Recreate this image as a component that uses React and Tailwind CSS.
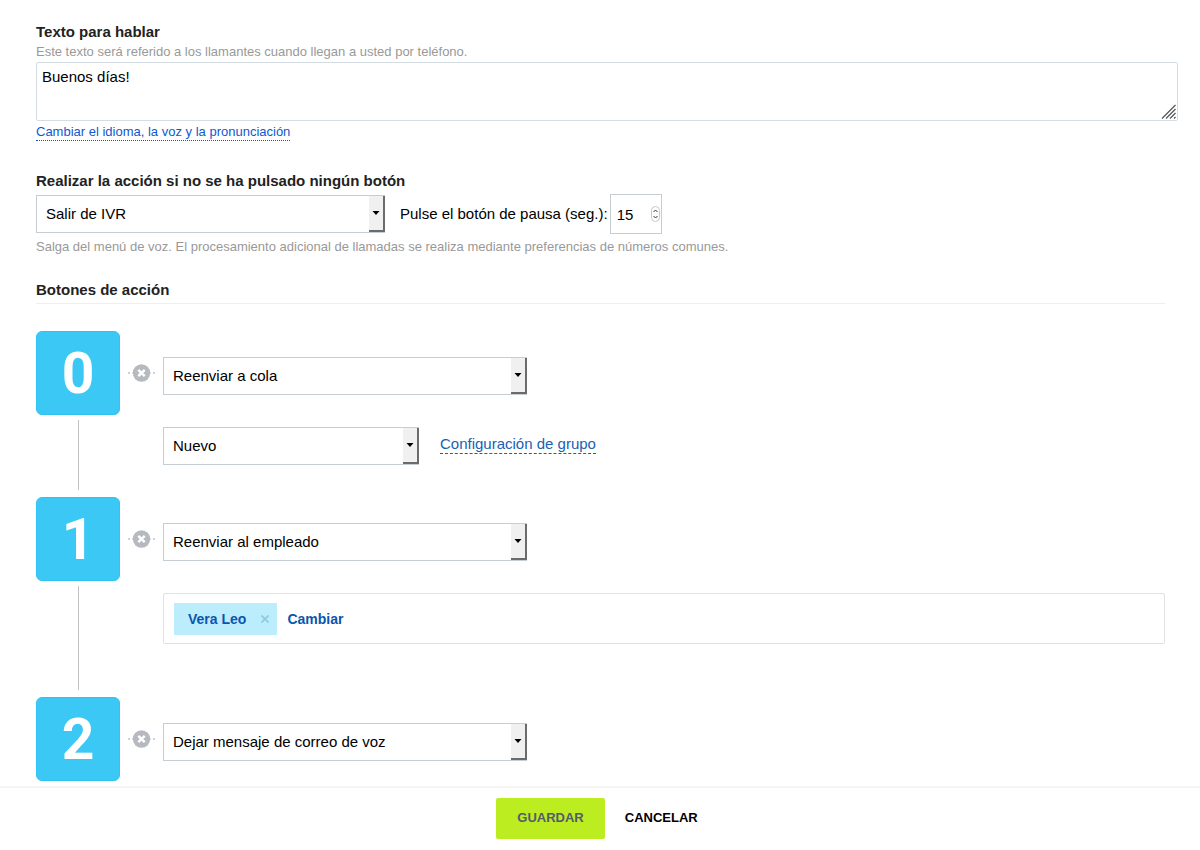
import React, { useState } from "react";

const ResizeGrip = () => (
  <svg
    className="absolute right-[1px] bottom-[2px] pointer-events-none"
    width="16"
    height="15"
    viewBox="0 0 16 15"
    stroke="#555"
    strokeWidth="1.2"
    aria-hidden="true"
  >
    <path d="M1 14.5L14.5 1M5 14.5L14.5 5M9 14.5L14.5 9M13 14.5L14.5 13" />
  </svg>
);

const SelectBox = ({ label, options, className }) => {
  const [value, setValue] = useState(options[0]);

  return (
    <div className={`relative h-[38px] ${className}`}>
      <select
        aria-label={label}
        value={value}
        onChange={(e) => setValue(e.target.value)}
        className="appearance-none block w-full h-full pl-[9px] pr-5 border border-[#c6cdd3] bg-white text-[15px] text-black"
      >
        {options.map((option) => (
          <option key={option}>{option}</option>
        ))}
      </select>
      <span className="absolute top-[1px] right-0 bottom-[1px] w-4 flex items-center justify-center bg-[#f0f0f0] border-r-2 border-b-2 border-[#6b6b6b] pointer-events-none">
        <svg width="8" height="4" viewBox="0 0 8 4" aria-hidden="true">
          <path d="M0.5 0h7L4 4z" fill="#000" />
        </svg>
      </span>
    </div>
  );
};

const RemoveButton = ({ digit }) => (
  <button
    type="button"
    aria-label={`Eliminar botón ${digit}`}
    className="mt-[33px] w-[27px] h-[18px] shrink-0"
  >
    <svg width="27" height="18" viewBox="0 0 27 18" aria-hidden="true">
      <circle cx="1" cy="9" r="0.9" fill="#b9bcc2" />
      <path d="M4 9h19" stroke="#d5d7da" strokeWidth="1.5" />
      <circle cx="26" cy="9" r="0.9" fill="#b9bcc2" />
      <circle cx="13.5" cy="9" r="8.7" fill="#b6b9c0" />
      <path
        d="M10.3 5.8l6.4 6.4M16.7 5.8l-6.4 6.4"
        stroke="#fff"
        strokeWidth="2.5"
      />
    </svg>
  </button>
);

const ActionRow = ({ digit, action, className, children }) => (
  <li className={`flex ${className}`}>
    <div className="w-[84px] shrink-0 flex flex-col items-center">
      <div className="w-full h-[84px] shrink-0 flex items-center justify-center rounded-md bg-[#3bc8f5] border border-[#2fc3f3] font-['Roboto',sans-serif] font-bold text-[57px] leading-none text-white">
        {digit}
      </div>
      <div className="flex-1 w-px mt-[5px] mb-[7px] bg-[#bfc1c4]" />
    </div>
    <div className="mx-2">
      <RemoveButton digit={digit} />
    </div>
    <div className="flex-1 min-w-0 pt-[26px]">
      <SelectBox
        label={`Acción del botón ${digit}`}
        options={[action]}
        className="w-[364px] max-w-full"
      />
      {children}
    </div>
  </li>
);

const App = () => {
  const [text, setText] = useState("Buenos días!");
  const [pause, setPause] = useState(15);

  return (
    <form
      onSubmit={(e) => e.preventDefault()}
      className="h-screen flex flex-col bg-white font-['Liberation_Sans',Arial,sans-serif] text-[15px] leading-5 text-black"
    >
      <main className="flex-1 min-h-0 overflow-y-auto [scrollbar-width:none] pl-9 pr-[35px] pt-[22px]">
        <section className="-mr-[13px]">
          <label htmlFor="speech" className="block font-bold text-[#222]">
            Texto para hablar
          </label>
          <p className="text-[13px] text-[#999]">
            Este texto será referido a los llamantes cuando llegan a usted por
            teléfono.
          </p>
          <div className="relative">
            <textarea
              id="speech"
              value={text}
              onChange={(e) => setText(e.target.value)}
              className="block w-full h-[59px] px-[5px] py-1 resize-none rounded-xs border border-[#d5dde4]"
            />
            <ResizeGrip />
          </div>
          <a
            href="#voz"
            className="inline-block mt-[3px] text-[13px] leading-4 text-[#1058d0] border-b border-dotted border-[#1058d0]"
          >
            Cambiar el idioma, la voz y la pronunciación
          </a>
        </section>

        <section className="mt-[30px]">
          <h2 className="font-bold text-[#222]">
            Realizar la acción si no se ha pulsado ningún botón
          </h2>
          <div className="flex items-center mt-[3px]">
            <SelectBox
              label="Acción si no se ha pulsado ningún botón"
              options={["Salir de IVR"]}
              className="w-[349px]"
            />
            <label htmlFor="pause" className="ml-[15px] mr-[2px]">
              Pulse el botón de pausa (seg.):
            </label>
            <div className="relative">
              <input
                id="pause"
                type="number"
                value={pause}
                onChange={(e) => setPause(e.target.value)}
                className="block w-[52px] h-10 pl-[6px] border border-[#c6cdd3] [appearance:textfield]"
              />
              <svg
                className="absolute right-[2px] top-3 pointer-events-none"
                width="9"
                height="16"
                viewBox="0 0 9 16"
                fill="none"
                aria-hidden="true"
              >
                <rect x="0.5" y="0.5" width="8" height="15" rx="4" stroke="#c8c8c8" />
                <path
                  d="M2.5 6L4.5 4L6.5 6M2.5 10L4.5 12L6.5 10"
                  stroke="#333"
                />
              </svg>
            </div>
          </div>
          <p className="mt-[3px] text-[13px] text-[#999]">
            Salga del menú de voz. El procesamiento adicional de llamadas se
            realiza mediante preferencias de números comunes.
          </p>
        </section>

        <section className="mt-[23px]">
          <h2 className="pb-[3px] font-bold text-[#222] border-b border-[#eee]">
            Botones de acción
          </h2>
          <ul className="mt-[27px]">
            <ActionRow
              digit="0"
              action="Reenviar a cola"
              className="min-h-[166px]"
            >
              <div className="flex items-center mt-8">
                <SelectBox
                  label="Grupo"
                  options={["Nuevo"]}
                  className="w-[256px]"
                />
                <a
                  href="#grupo"
                  className="ml-[21px] mb-1 leading-[18px] text-[#1a5fb4] border-b border-dashed border-[#1a5fb4]"
                >
                  Configuración de grupo
                </a>
              </div>
            </ActionRow>
            <ActionRow
              digit="1"
              action="Reenviar al empleado"
              className="min-h-[200px]"
            >
              <div className="flex items-center h-[51px] mt-8 px-[10px] rounded-xs border border-[#e0e2e4] font-bold text-sm text-[#0b55ae]">
                <span className="flex items-center h-8 pl-[14px] pr-2 bg-[#bbedfc]">
                  Vera Leo
                  <button
                    type="button"
                    aria-label="Quitar Vera Leo"
                    className="ml-[15px]"
                  >
                    <svg width="8" height="8" viewBox="0 0 8 8" aria-hidden="true">
                      <path
                        d="M0.5 0.5l7 7M7.5 0.5l-7 7"
                        stroke="#90cbe0"
                        strokeWidth="1.8"
                      />
                    </svg>
                  </button>
                </span>
                <button type="button" className="ml-[10px]">
                  Cambiar
                </button>
              </div>
            </ActionRow>
            <ActionRow
              digit="2"
              action="Dejar mensaje de correo de voz"
              className="min-h-[166px]"
            />
          </ul>
        </section>
      </main>

      <footer className="flex items-center justify-center gap-5 h-16 pb-[2px] pr-[6px] shrink-0 border-t-2 border-[#f5f5f5] bg-white font-bold text-[13px]">
        <button
          type="submit"
          className="h-[41px] px-[21px] rounded-xs bg-[#bbed21] text-[#535c69]"
        >
          GUARDAR
        </button>
        <button type="button" className="h-[41px]">
          CANCELAR
        </button>
      </footer>
    </form>
  );
};

export default App;
